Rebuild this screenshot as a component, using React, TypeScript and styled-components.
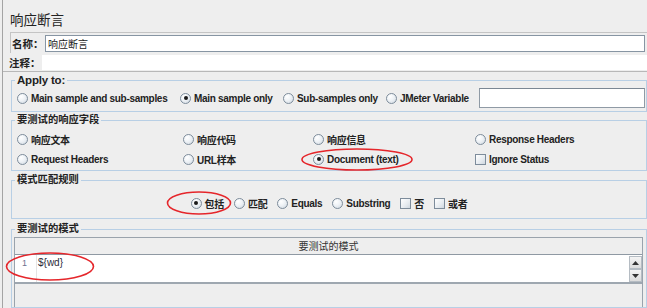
import React from 'react';
import styled, { createGlobalStyle } from 'styled-components';

const Global = createGlobalStyle`
  html, body { margin: 0; padding: 0; background: #eeeeee; }
  body {
    font-family: "Liberation Sans", Arial, "Noto Sans CJK SC", sans-serif;
    color: #222;
  }
  * { box-sizing: border-box; }
`;

const Page = styled.div`
  position: relative;
  width: 647px;
  height: 308px;
  overflow: hidden;
  background: #eeeeee;
`;

const Frame = styled.div`
  margin-left: 2px;
  border-left: 1px solid #a4a4a4;
  height: 308px;
  display: flex;
  flex-direction: column;
`;

const Title = styled.div`
  height: 32px;
  padding: 6px 0 0 7px;
  line-height: 26px;
  font-family: "Noto Sans CJK SC", sans-serif;
  font-size: 13.5px;
  color: #222;
`;

const NameRow = styled.div`
  margin-left: 7px;
  height: 21px;
  border-top: 1px solid #c4c4c4;
  border-left: 1px solid #c4c4c4;
  display: flex;
  align-items: center;
`;

const CommentRow = styled.div`
  height: 19px;
  padding: 1px 0 0 5px;
  display: flex;
  align-items: center;
  border-bottom: 1px solid #b8b8b8;
`;

const FieldLabel = styled.span<{ $w: number }>`
  width: ${p => p.$w}px;
  font-family: "Noto Sans CJK SC", sans-serif;
  font-weight: 700;
  font-size: 10.5px;
  padding-left: 1px;
`;

const NameInput = styled.div`
  flex: 1;
  height: 17px;
  margin-right: 2px;
  background: #fff;
  border: 1px solid #8795a3;
  font-family: "Noto Sans CJK SC", sans-serif;
  font-size: 10px;
  line-height: 15px;
  padding-left: 2px;
`;

const CommentInput = styled.div`
  flex: 1;
  height: 15px;
  background: #fff;
`;

const Group = styled.fieldset<{ $mt: number; $pt: number; $pb: number; $grow?: boolean }>`
  margin: ${p => p.$mt}px 0 0 8px;
  border: 1px solid #b8cfe5;
  padding: ${p => p.$pt}px 0 ${p => p.$pb}px 0;
  min-width: 0;
  ${p => (p.$grow ? 'flex: 1; display: flex; flex-direction: column;' : '')}
`;

const Legend = styled.legend<{ $latin?: boolean }>`
  margin-left: 3px;
  padding: 0 2px;
  font-size: ${p => (p.$latin ? '11.5px' : '10.3px')};
  font-weight: 700;
  line-height: 12px;
  letter-spacing: ${p => (p.$latin ? '-0.2px' : '0')};
  color: #222;
`;

const ApplyRow = styled.div`
  display: flex;
  align-items: center;
  height: 20px;
  padding-left: 5px;
`;

const Item = styled.label<{ $w?: number }>`
  display: flex;
  align-items: center;
  gap: 3px;
  ${p => (p.$w ? `width: ${p.$w}px;` : '')}
  flex: none;
  font-size: 10px;
  font-weight: 700;
  letter-spacing: -0.3px;
  white-space: nowrap;
  color: #222;
`;

const Radio = styled.span<{ $on?: boolean }>`
  width: 11px;
  height: 11px;
  border-radius: 50%;
  border: 1px solid #7d8c9b;
  background: radial-gradient(circle at 35% 30%, #ffffff 0%, #eef2f6 45%, #cdd6df 100%);
  display: flex;
  align-items: center;
  justify-content: center;
  flex: none;
  &::after {
    content: '';
    display: ${p => (p.$on ? 'block' : 'none')};
    width: 4px;
    height: 4px;
    border-radius: 50%;
    background: #1a1a1a;
  }
`;

const Check = styled.span`
  width: 11px;
  height: 11px;
  border: 1px solid #7d8c9b;
  background: linear-gradient(135deg, #ffffff 0%, #e6ebf0 60%, #cfd7df 100%);
  flex: none;
`;

const VarInput = styled.div`
  width: 166px;
  height: 20px;
  background: #fff;
  border: 1px solid #8f9aa5;
  border-top-color: #7b8794;
`;

const FieldGrid = styled.div`
  display: grid;
  grid-template-columns: 166px 130px 162px 1fr;
  grid-auto-rows: 20px;
  align-items: center;
  padding-left: 5px;
`;

const CenterRow = styled.div`
  display: flex;
  justify-content: center;
  align-items: center;
  gap: 10px;
  height: 20px;
`;

const TableBox = styled.div`
  flex: 1;
  margin: 0 3px 0 2px;
  border: 1px solid #9aa3ac;
  border-bottom: none;
  display: flex;
  flex-direction: column;
`;

const Header = styled.div`
  height: 17px;
  border-bottom: 1px solid #8f99a3;
  background: #eeeeee;
  text-align: center;
  font-family: "Noto Sans CJK SC", sans-serif;
  font-size: 10px;
  line-height: 16px;
  color: #333;
`;

const Editor = styled.div`
  height: 29px;
  background: #fff;
  border-bottom: 2px solid #9ea7b0;
  display: flex;
`;

const Gutter = styled.div`
  width: 22px;
  border-right: 1px solid #e4e4e4;
  padding: 2px 0 0 7px;
  font-size: 9px;
  color: #6f7290;
  line-height: 12px;
`;

const Code = styled.div`
  flex: 1;
  padding: 2px 0 0 1px;
  font-size: 10px;
  line-height: 12px;
  color: #2b2b3a;
`;

const ScrollCol = styled.div`
  width: 13px;
  display: flex;
  flex-direction: column;
  padding-top: 1px;
`;

const ScrollBtn = styled.div`
  height: 13px;
  background: linear-gradient(#f4f4f4, #dcdcdc);
  border: 1px solid #b5bcc3;
  display: flex;
  align-items: center;
  justify-content: center;
`;

const Overlay = styled.svg`
  position: absolute;
  left: 0;
  top: 0;
  pointer-events: none;
`;

const Arrow = ({ up }: { up?: boolean }) => (
  <svg width="7" height="4" viewBox="0 0 7 4">
    <polygon points={up ? '0,4 7,4 3.5,0' : '0,0 7,0 3.5,4'} fill="#333" />
  </svg>
);

const applyItems: { label: string; w: number; on?: boolean }[] = [
  { label: 'Main sample and sub-samples', w: 163 },
  { label: 'Main sample only', w: 103, on: true },
  { label: 'Sub-samples only', w: 103 },
  { label: 'JMeter Variable', w: 93 },
];

const fieldItems: { label: string; check?: boolean; on?: boolean }[] = [
  { label: '响应文本' },
  { label: '响应代码' },
  { label: '响应信息' },
  { label: 'Response Headers' },
  { label: 'Request Headers' },
  { label: 'URL样本' },
  { label: 'Document (text)', on: true },
  { label: 'Ignore Status', check: true },
];

const ruleItems: { label: string; check?: boolean; on?: boolean }[] = [
  { label: '包括', on: true },
  { label: '匹配' },
  { label: 'Equals' },
  { label: 'Substring' },
  { label: '否', check: true },
  { label: '或者', check: true },
];

export default function App() {
  return (
    <Page>
      <Global />
      <Frame>
        <Title>响应断言</Title>
        <NameRow>
          <FieldLabel $w={34}>名称：</FieldLabel>
          <NameInput>响应断言</NameInput>
        </NameRow>
        <CommentRow>
          <FieldLabel $w={34}>注释：</FieldLabel>
          <CommentInput />
        </CommentRow>

        <Group $mt={2} $pt={2} $pb={3}>
          <Legend $latin>Apply to:</Legend>
          <ApplyRow>
            {applyItems.map(it => (
              <Item key={it.label} $w={it.w}>
                <Radio $on={it.on} />
                {it.label}
              </Item>
            ))}
            <VarInput />
          </ApplyRow>
        </Group>

        <Group $mt={2} $pt={3} $pb={1}>
          <Legend>要测试的响应字段</Legend>
          <FieldGrid>
            {fieldItems.map(it => (
              <Item key={it.label}>
                {it.check ? <Check /> : <Radio $on={it.on} />}
                {it.label}
              </Item>
            ))}
          </FieldGrid>
        </Group>

        <Group $mt={3} $pt={7} $pb={5}>
          <Legend>模式匹配规则</Legend>
          <CenterRow>
            {ruleItems.map(it => (
              <Item key={it.label}>
                {it.check ? <Check /> : <Radio $on={it.on} />}
                {it.label}
              </Item>
            ))}
          </CenterRow>
        </Group>

        <Group $mt={4} $pt={2} $pb={0} $grow>
          <Legend>要测试的模式</Legend>
          <TableBox>
            <Header>要测试的模式</Header>
            <Editor>
              <Gutter>1</Gutter>
              <Code>{'${wd}'}</Code>
              <ScrollCol>
                <ScrollBtn><Arrow up /></ScrollBtn>
                <ScrollBtn><Arrow /></ScrollBtn>
              </ScrollCol>
            </Editor>
          </TableBox>
        </Group>
      </Frame>

      <Overlay width="647" height="308" viewBox="0 0 647 308">
        <ellipse cx="357" cy="159.5" rx="55" ry="10.5" fill="none" stroke="#e5262b" strokeWidth="1.6" />
        <ellipse cx="199" cy="203" rx="31.5" ry="11" fill="none" stroke="#e5262b" strokeWidth="1.6" />
        <ellipse cx="50" cy="266.5" rx="43.5" ry="13.5" fill="none" stroke="#e5262b" strokeWidth="1.6" />
      </Overlay>
    </Page>
  );
}
